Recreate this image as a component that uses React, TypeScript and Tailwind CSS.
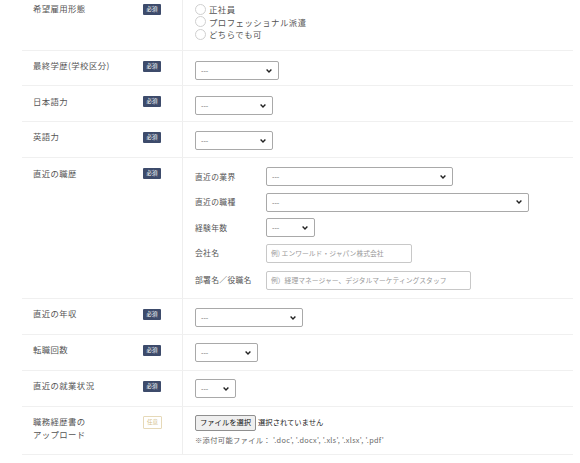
import React from "react";

const font = { fontFamily: '"Noto Sans CJK JP", "Noto Sans", sans-serif' };

function Badge({ optional }: { optional?: boolean }) {
  if (optional) {
    return (
      <span className="flex h-[13px] w-[19px] items-center justify-center rounded-[1px] border border-[#e6d9b8] text-[5.5px] leading-none text-[#d4bf8a]">
        任意
      </span>
    );
  }
  return (
    <span className="flex h-[11px] w-[18px] items-center justify-center rounded-[1px] bg-[#3d4b6b] text-[5.5px] leading-none text-white">
      必須
    </span>
  );
}

function Chevron() {
  return (
    <svg width="6" height="4" viewBox="0 0 6 4" className="shrink-0">
      <path d="M0.6 0.6 L3 3 L5.4 0.6" fill="none" stroke="#222" strokeWidth="1.4" />
    </svg>
  );
}

function Select({ w }: { w: string }) {
  return (
    <div
      className={`${w} flex h-[19px] items-center justify-between rounded-[2px] border border-[#a9a9a9] bg-white pl-[5px] pr-[6px]`}
    >
      <span className="text-[7px] leading-none text-[#666]">---</span>
      <Chevron />
    </div>
  );
}

function Input({ w, placeholder }: { w: string; placeholder: string }) {
  return (
    <div
      className={`${w} flex h-[19px] items-center rounded-[2px] border border-[#c8c8c8] bg-white pl-[4px]`}
    >
      <span className="whitespace-nowrap text-[6.8px] leading-none text-[#999]">{placeholder}</span>
    </div>
  );
}

function Row({
  label,
  h,
  pt,
  badgePt,
  contentPt,
  optional,
  children,
}: {
  label: React.ReactNode;
  h: string;
  pt: string;
  badgePt: string;
  contentPt: string;
  optional?: boolean;
  children: React.ReactNode;
}) {
  return (
    <div className={`flex ${h} border-b border-[#f0f0f0]`}>
      <div className="flex w-[161px] shrink-0 items-start border-r border-[#eeeeee]">
        <div className={`w-[121px] pl-[11px] ${pt} text-[8.4px] leading-[13px] tracking-[0.4px] text-[#555]`}>
          {label}
        </div>
        <div className={`flex items-start ${badgePt}`}>
          <Badge optional={optional} />
        </div>
      </div>
      <div className={`flex-1 pl-[12px] ${contentPt}`}>{children}</div>
    </div>
  );
}

function Radio({ label }: { label: string }) {
  return (
    <div className="flex h-[12.5px] items-center gap-[3px]">
      <span className="h-[11px] w-[11px] rounded-full border border-[#d0d0d0] bg-white" />
      <span className="text-[8.4px] leading-none tracking-[0.5px] text-[#555]">{label}</span>
    </div>
  );
}

function SubRow({ label, children }: { label: string; children: React.ReactNode }) {
  return (
    <div className="flex items-center">
      <div className="w-[71px] shrink-0 text-[7.8px] leading-none tracking-[0.3px] text-[#555]">{label}</div>
      {children}
    </div>
  );
}

export default function App() {
  return (
    <div className="h-[463px] w-[580px] bg-white" style={font}>
      <div className="w-[551px] pl-[22px] box-content">
        <Row label="希望雇用形態" h="h-[51px]" pt="pt-[2px]" badgePt="pt-[4px]" contentPt="pt-[3px]">
          <Radio label="正社員" />
          <Radio label="プロフェッショナル派遣" />
          <Radio label="どちらでも可" />
        </Row>
        <Row label="最終学歴(学校区分)" h="h-[35px]" pt="pt-[8px]" badgePt="pt-[10px]" contentPt="pt-[10px]">
          <Select w="w-[84px]" />
        </Row>
        <Row label="日本語力" h="h-[36px]" pt="pt-[9px]" badgePt="pt-[10px]" contentPt="pt-[10px]">
          <Select w="w-[78px]" />
        </Row>
        <Row label="英語力" h="h-[36px]" pt="pt-[8px]" badgePt="pt-[10px]" contentPt="pt-[9px]">
          <Select w="w-[78px]" />
        </Row>
        <Row label="直近の職歴" h="h-[141px]" pt="pt-[9px]" badgePt="pt-[10px]" contentPt="pt-[9px]">
          <div className="flex flex-col gap-[6.5px]">
            <SubRow label="直近の業界">
              <Select w="w-[187px]" />
            </SubRow>
            <SubRow label="直近の職種">
              <Select w="w-[263px]" />
            </SubRow>
            <SubRow label="経験年数">
              <Select w="w-[49px]" />
            </SubRow>
            <div className="h-[1.5px]" />
          </div>
          <div className="-mt-[1.5px] flex flex-col gap-[8px]">
            <SubRow label="会社名">
              <Input w="w-[146px]" placeholder="例) エンワールド・ジャパン株式会社" />
            </SubRow>
            <SubRow label="部署名／役職名">
              <Input w="w-[205px]" placeholder="例）経理マネージャー、デジタルマーケティングスタッフ" />
            </SubRow>
          </div>
        </Row>
        <Row label="直近の年収" h="h-[36px]" pt="pt-[8px]" badgePt="pt-[10px]" contentPt="pt-[9px]">
          <Select w="w-[108px]" />
        </Row>
        <Row label="転職回数" h="h-[36px]" pt="pt-[8px]" badgePt="pt-[10px]" contentPt="pt-[8px]">
          <Select w="w-[63px]" />
        </Row>
        <Row label="直近の就業状況" h="h-[36px]" pt="pt-[8px]" badgePt="pt-[10px]" contentPt="pt-[8px]">
          <Select w="w-[41px]" />
        </Row>
        <Row
          label={
            <>
              職務経歴書の
              <br />
              アップロード
            </>
          }
          h="h-[48px]"
          pt="pt-[8px]"
          badgePt="pt-[9px]"
          contentPt="pt-[8px]"
          optional
        >
          <div className="flex items-center gap-[2px]">
            <div className="flex h-[16px] items-center rounded-[2px] border border-[#8f8f8f] bg-[#efefef] px-[4px] text-[7.3px] leading-none text-[#111]">
              ファイルを選択
            </div>
            <span className="text-[7.3px] leading-none text-[#222]">選択されていません</span>
          </div>
          <div className="mt-[6px] text-[7.3px] leading-none tracking-[0.3px] text-[#666]">
            ※添付可能ファイル： '.doc', '.docx', '.xls', '.xlsx', '.pdf'
          </div>
        </Row>
      </div>
    </div>
  );
}
